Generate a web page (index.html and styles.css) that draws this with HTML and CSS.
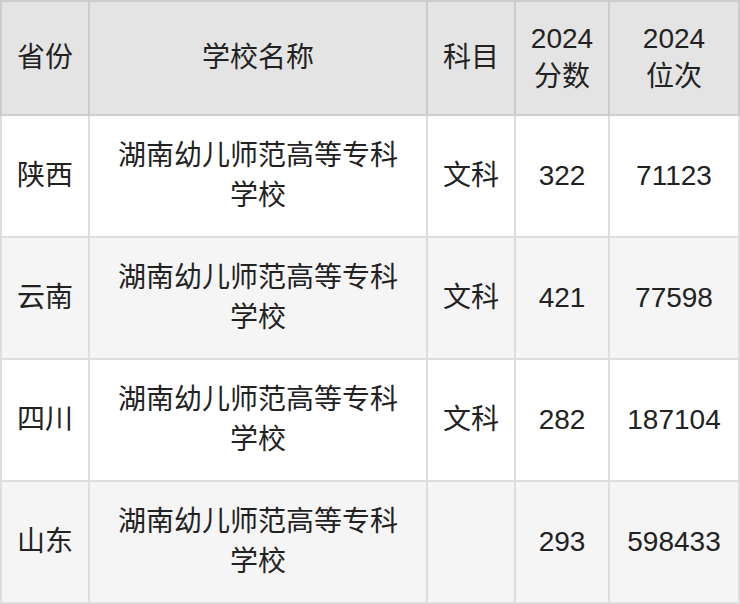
FILE: index.html
```html
<!DOCTYPE html>
<html lang="zh">
<head>
<meta charset="utf-8">
<link rel="stylesheet" href="styles.css">
</head>
<body>
<table class="score-table">
  <colgroup>
    <col class="c-prov">
    <col class="c-school">
    <col class="c-subj">
    <col class="c-score">
    <col class="c-rank">
  </colgroup>
  <thead>
    <tr class="head-row">
      <th>省份</th>
      <th>学校名称</th>
      <th>科目</th>
      <th>2024<br>分数</th>
      <th>2024<br>位次</th>
    </tr>
  </thead>
  <tbody>
    <tr class="row">
      <td>陕西</td>
      <td class="school">湖南幼儿师范高等专科学校</td>
      <td>文科</td>
      <td>322</td>
      <td>71123</td>
    </tr>
    <tr class="row alt">
      <td>云南</td>
      <td class="school">湖南幼儿师范高等专科学校</td>
      <td>文科</td>
      <td>421</td>
      <td>77598</td>
    </tr>
    <tr class="row">
      <td>四川</td>
      <td class="school">湖南幼儿师范高等专科学校</td>
      <td>文科</td>
      <td>282</td>
      <td>187104</td>
    </tr>
    <tr class="row alt">
      <td>山东</td>
      <td class="school">湖南幼儿师范高等专科学校</td>
      <td></td>
      <td>293</td>
      <td>598433</td>
    </tr>
  </tbody>
</table>
</body>
</html>
```

FILE: styles.css
```css
html, body {
  margin: 0;
  padding: 0;
  background: #ffffff;
}

.score-table {
  width: 740px;
  table-layout: fixed;
  border-collapse: collapse;
  font-family: "Liberation Sans", "Noto Sans CJK SC", sans-serif;
  font-size: 28px;
  color: #222222;
}

.c-prov { width: 88px; }
.c-school { width: 338px; }
.c-subj { width: 88px; }
.c-score { width: 94px; }
.c-rank { width: 130px; }

.score-table th,
.score-table td {
  padding: 0;
  text-align: center;
  vertical-align: middle;
}

.score-table th {
  font-weight: normal;
  background: #e4e4e4;
  border: 2px solid #cccccc;
  height: 112px;
  line-height: 38px;
}

.score-table td {
  border: 2px solid #dddddd;
  height: 120px;
  line-height: 40px;
}

.row { background: #ffffff; }
.row.alt { background: #f5f5f5; }

.score-table td.school {
  padding: 0 20px;
}
```
